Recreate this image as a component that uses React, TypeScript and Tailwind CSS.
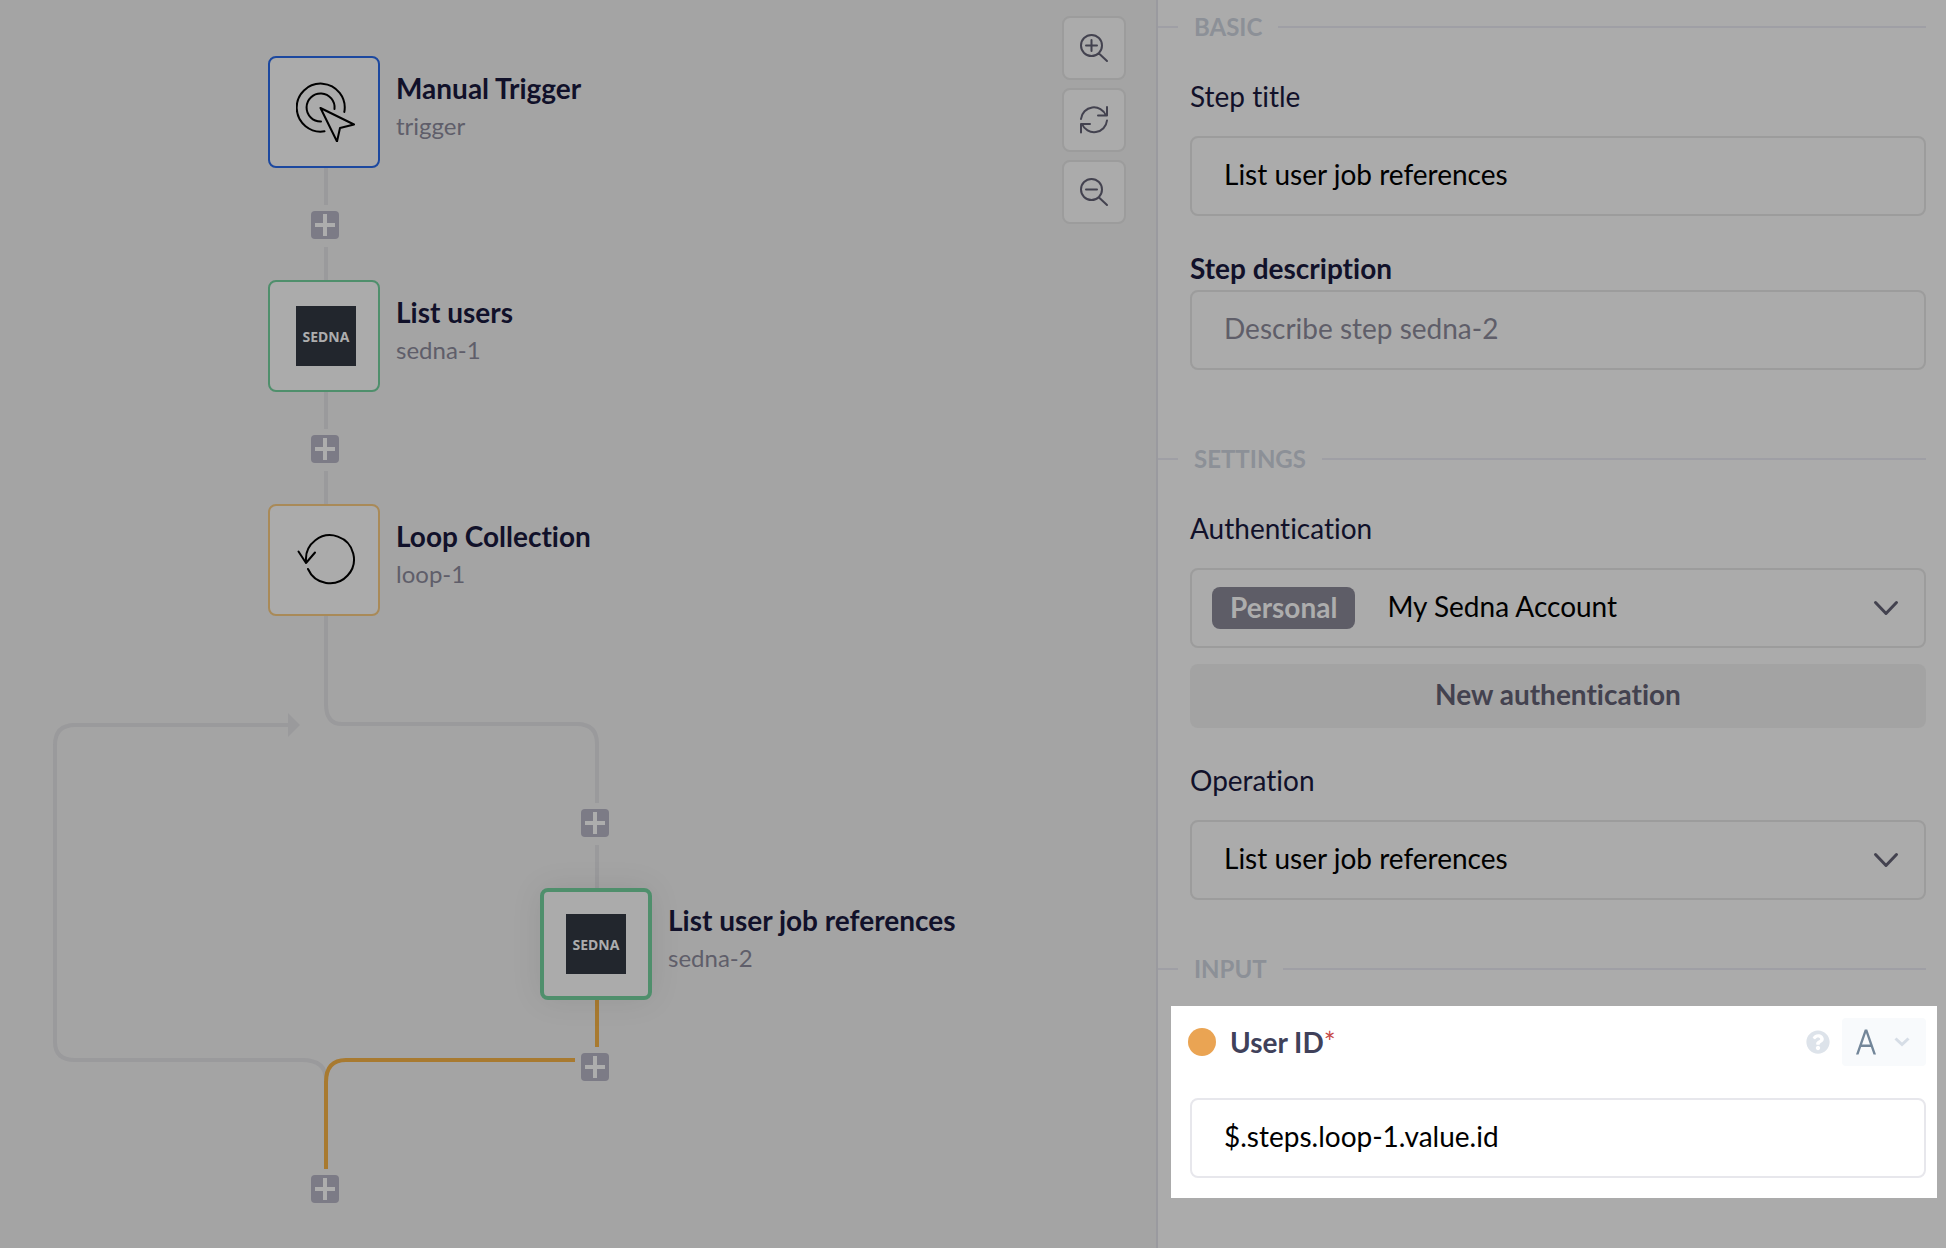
import React, { useState } from 'react'
import { FaQuestionCircle } from 'react-icons/fa'
import { LiaFontSolid } from 'react-icons/lia'

const TriggerIcon = () => (
  <svg viewBox="0 0 60 60" className="w-[60px] h-[60px]" fill="none" stroke="#000" strokeWidth="2" strokeLinecap="round" strokeLinejoin="round">
    <path d="M28.500 49.300A24 24 0 1 1 48.300 30" />
    <path d="M25 39.500A14 14 0 1 1 38.500 27" />
    <path d="M24.500 26l33.500 16.500-14 3.500-3 13.500z" />
  </svg>
)

const LoopIcon = () => (
  <svg viewBox="0 0 60 60" className="w-[60px] h-[60px]" fill="none" stroke="#000" strokeWidth="2" strokeLinecap="round" strokeLinejoin="round">
    <path d="M12 39A24 24 0 1 0 10 31" />
    <path d="M2.500 21.500l7.500 11.500 9-10.500" />
  </svg>
)

const SednaLogo = () => (
  <div className="w-[60px] h-[60px] bg-[#22262d] flex items-center justify-center font-['Noto_Sans'] font-bold text-[14px] text-[#adadad]">
    SEDNA
  </div>
)

type StepNode = {
  id: string
  title: string
  pos: string
  box: string
  icon: React.ReactNode
}

const NODES: StepNode[] = [
  { id: 'trigger', title: 'Manual Trigger', pos: 'left-[268px] top-[56px]', box: 'pl-1 border-2 border-[#1c489f]', icon: <TriggerIcon /> },
  { id: 'sedna-1', title: 'List users', pos: 'left-[268px] top-[280px]', box: 'pl-1 border-2 border-[#4f8f6c]', icon: <SednaLogo /> },
  { id: 'loop-1', title: 'Loop Collection', pos: 'left-[268px] top-[504px]', box: 'pl-1 border-2 border-[#a98a58]', icon: <LoopIcon /> },
  {
    id: 'sedna-2',
    title: 'List user job references',
    pos: 'left-[540px] top-[888px]',
    box: 'border-4 border-[#4f8f6c] shadow-[0_0_32px_rgba(0,0,0,0.08)]',
    icon: <SednaLogo />,
  },
]

const ADD_BUTTONS = [
  'left-[311px] top-[211px]',
  'left-[311px] top-[435px]',
  'left-[581px] top-[809px]',
  'left-[581px] top-[1053px]',
  'left-[311px] top-[1175px]',
]

const Connectors = () => (
  <svg className="absolute left-0 top-0 w-[700px] h-[1248px]" viewBox="0 0 700 1248" fill="none" strokeWidth="4">
    <g stroke="#9a9a9c">
      <path d="M326 168V205M326 247V280M326 392V429M326 471V504" />
      <path d="M326 616V704Q326 724 342 724H577Q597 724 597 744V803" />
      <path d="M597 845V888" />
      <path d="M326 1080Q326 1060 302 1060H75Q55 1060 55 1042V745Q55 725 75 725H288" />
    </g>
    <path d="M288 713L300 725L288 737Z" fill="#9a9a9c" />
    <path stroke="#a87a30" d="M597 1000V1047M575 1060H346Q326 1060 326 1082V1169" />
  </svg>
)

const NodeCard = ({ node }: { node: StepNode }) => (
  <div className={`absolute flex gap-4 ${node.pos}`}>
    <div className={`w-28 h-28 rounded-lg bg-[#ababab] flex items-center justify-center ${node.box}`}>{node.icon}</div>
    <div className="pt-3 whitespace-nowrap">
      <div className="text-[28px] leading-10 font-bold text-[#11112a]">{node.title}</div>
      <div className="text-[24px] leading-9 text-[#5f5e6a]">{node.id}</div>
    </div>
  </div>
)

const Chevron = () => (
  <svg viewBox="0 0 26 16" className="w-[26px] h-4 shrink-0 pointer-events-none" fill="none" stroke="#43424f" strokeWidth="3" strokeLinecap="round" strokeLinejoin="round">
    <path d="M2.500 2.500L13 13.500L23.500 2.500" />
  </svg>
)

const zoomIcons = [
  { label: 'Zoom in', d: 'M12.500 2a10.500 10.500 0 1 0 0 21a10.500 10.500 0 1 0 0-21zM20 20.500l8 7.500M12.500 7v11M7 12.500h11' },
  { label: 'Reset view', d: 'M2 14A13 13 0 0 1 27 10.500M28 2v8.500h-9M28 15.500A13 13 0 0 1 3 19M2 27.500v-8.500h9' },
  { label: 'Zoom out', d: 'M12.500 2a10.500 10.500 0 1 0 0 21a10.500 10.500 0 1 0 0-21zM20 20.500l8 7.500M7 12.500h11' },
]

const Divider = ({ children }: { children: React.ReactNode }) => (
  <div className="flex items-center gap-4 h-[30px] mr-5">
    <div className="w-5 h-0.5 bg-[#9f9fa5]" />
    <h2 className="text-[24px] leading-[30px] font-bold text-[#8c9097]">{children}</h2>
    <div className="flex-1 h-0.5 bg-[#9f9fa5]" />
  </div>
)

const labelClass = 'block text-[28px] leading-10 text-[#11112a]'
const inputClass = 'block w-full h-20 px-8 pb-1 rounded-lg border-2 bg-transparent text-[28px] text-black outline-none'
const selectBoxClass = 'flex items-center h-20 rounded-lg border-2 border-[#9c9c9c] pr-[25px]'
const selectClass = 'flex-1 min-w-0 h-full pb-1 appearance-none bg-transparent text-[28px] text-black outline-none'

export default function App() {
  const [title, setTitle] = useState('List user job references')
  const [description, setDescription] = useState('')
  const [userId, setUserId] = useState('$.steps.loop-1.value.id')

  return (
    <div className="flex min-h-screen bg-[#a4a4a4] font-['Lato',sans-serif] [font-variant-ligatures:none]">
      {/* Workflow canvas */}
      <main className="relative flex-1 min-w-0 overflow-hidden">
        <Connectors />
        {NODES.map((node) => (
          <NodeCard key={node.id} node={node} />
        ))}
        {ADD_BUTTONS.map((pos) => (
          <button key={pos} aria-label="Add step" className={`absolute w-7 h-7 rounded bg-[#7c7b86] ${pos}`}>
            <svg viewBox="0 0 28 28" className="w-7 h-7" stroke="#adadad" strokeWidth="4">
              <path d="M14 3v22M4 14h20" />
            </svg>
          </button>
        ))}

        {/* Zoom controls */}
        <div className="absolute top-4 right-[30px] flex flex-col gap-2">
          {zoomIcons.map((icon) => (
            <button key={icon.label} aria-label={icon.label} className="w-16 h-16 rounded-lg border-2 border-[#9c9c9c] bg-[#ababab] flex items-center justify-center">
              <svg viewBox="0 0 30 30" className="w-[30px] h-[30px]" fill="none" stroke="#43424f" strokeWidth="2" strokeLinecap="round" strokeLinejoin="round">
                <path d={icon.d} />
              </svg>
            </button>
          ))}
        </div>
      </main>

      {/* Step settings */}
      <aside className="w-[790px] shrink-0 border-l-2 border-[#9a9a9f] bg-[#ababab] pt-3">
        <section>
          <Divider>BASIC</Divider>
          <div className="pl-8 pr-5 pt-[34px]">
            <label htmlFor="title" className={`${labelClass} mb-5`}>Step title</label>
            <input id="title" className={`${inputClass} border-[#9c9c9c]`} value={title} onChange={(e) => setTitle(e.target.value)} />
            <label htmlFor="description" className={`${labelClass} mt-8 mb-0.5 font-bold`}>Step description</label>
            <input
              id="description"
              className={`${inputClass} border-[#9c9c9c] placeholder:text-[#5f5e69]`}
              placeholder="Describe step sedna-2"
              value={description}
              onChange={(e) => setDescription(e.target.value)}
            />
          </div>
        </section>

        <section className="mt-[74px]">
          <Divider>SETTINGS</Divider>
          <div className="pl-8 pr-5 pt-[34px]">
            <label htmlFor="auth" className={`${labelClass} mb-5`}>Authentication</label>
            <div className={`${selectBoxClass} pl-5`}>
              <span className="h-[42px] px-[18px] mr-8 rounded-lg bg-[#5e5d67] text-[28px] leading-10 font-bold text-[#adadad]">Personal</span>
              <select id="auth" className={selectClass}>
                <option>My Sedna Account</option>
              </select>
              <Chevron />
            </div>
            <button className="w-full h-16 mt-4 pb-1 rounded-lg bg-[#a3a3a3] text-[28px] font-bold text-[#43424f]">New authentication</button>
            <label htmlFor="operation" className={`${labelClass} mt-8 mb-5`}>Operation</label>
            <div className={`${selectBoxClass} pl-8`}>
              <select id="operation" className={selectClass}>
                <option>List user job references</option>
              </select>
              <Chevron />
            </div>
          </div>
        </section>

        <section className="mt-[54px]">
          <Divider>INPUT</Divider>
          <div className="mt-[22px] ml-[13px] mr-[9px] pl-[17px] pr-[11px] pt-3 pb-5 bg-white">
            <div className="flex items-center h-12 mb-8">
              <span className="w-7 h-7 rounded-full bg-[#eaa453]" />
              <label htmlFor="user-id" className="ml-3.5 text-[28px] leading-10 font-bold text-[#40415a]">
                User ID<span className="font-normal text-[#c74a48]">*</span>
              </label>
              <button aria-label="Help" className="ml-auto mr-3">
                <FaQuestionCircle className="w-6 h-6 text-[#dde3ea]" />
              </button>
              <button aria-label="Value type" className="flex items-center justify-between w-[84px] h-12 pl-1 pr-4 rounded bg-[#f8fafc]">
                <LiaFontSolid className="w-10 h-10 text-[#738699]" />
                <svg viewBox="0 0 16 10" className="w-4 h-2.5" fill="none" stroke="#d6dde6" strokeWidth="3">
                  <path d="M1.500 1.500L8 7.500L14.500 1.500" />
                </svg>
              </button>
            </div>
            <div className="pl-0.5">
              <input id="user-id" className={`${inputClass} border-[#e7e7ec]`} value={userId} onChange={(e) => setUserId(e.target.value)} />
            </div>
          </div>
        </section>
      </aside>
    </div>
  )
}
